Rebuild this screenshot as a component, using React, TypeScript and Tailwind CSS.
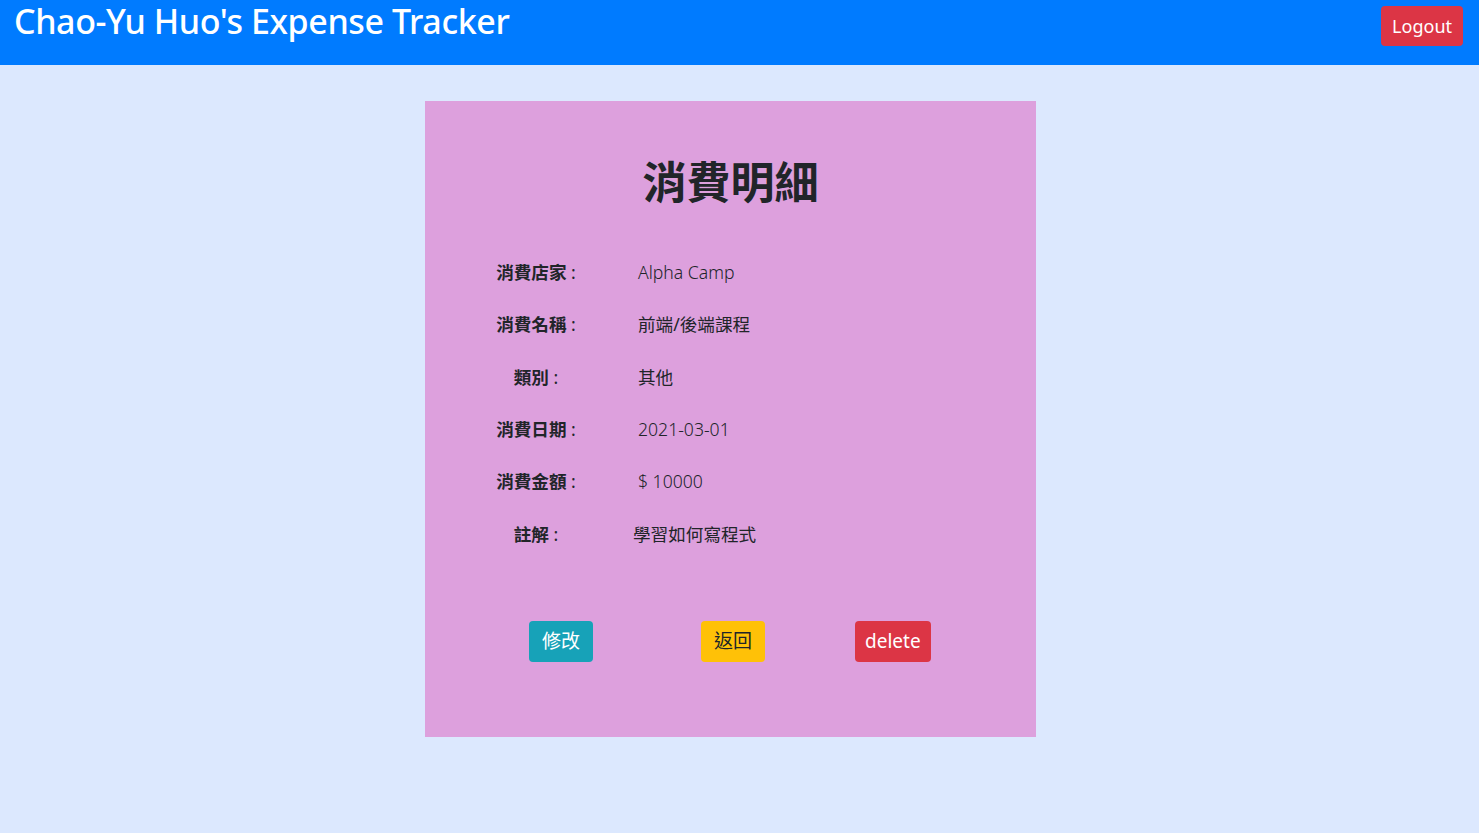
import React from "react";

const font = { fontFamily: '"Noto Sans", "Noto Sans CJK TC", sans-serif' };

const rows: { label: string; value: string; shift?: boolean; cjk?: boolean }[] = [
  { label: "消費店家", value: "Alpha Camp" },
  { label: "消費名稱", value: "前端/後端課程", cjk: true },
  { label: "類別", value: "其他", cjk: true },
  { label: "消費日期", value: "2021-03-01" },
  { label: "消費金額", value: "$ 10000" },
  { label: "註解", value: "學習如何寫程式", shift: true, cjk: true },
];

export default function App() {
  return (
    <div
      className="min-h-[833px] bg-[#dce8fe] text-[#212529] font-['Noto_Sans','Noto_Sans_CJK_TC',sans-serif]"
      style={font}
    >
      <nav className="h-[65px] bg-[#007bff] flex justify-between items-start pl-[14px] pr-[16px]">
        <h1 className="text-white text-[34px] font-medium leading-[1.2] mt-[1px] tracking-[-0.4px]">
          Chao-Yu Huo's Expense Tracker
        </h1>
        <button className="mt-[6px] h-[40px] px-[11px] rounded-[4px] bg-[#dc3545] text-white text-[18px] leading-none">
          Logout
        </button>
      </nav>
      <main className="pt-[36px] flex justify-center pr-[18px]">
        <div className="w-[611px] h-[636px] bg-[#dda0dd] flex flex-col">
          <h2 className="text-center text-[44px] font-bold leading-[1.2] mt-[55px] mb-0">
            消費明細
          </h2>
          <div className="mt-[37px] flex flex-col">
            {rows.map((r) => (
              <div key={r.label} className="flex items-center h-[52.4px] text-[17.6px]">
                <div className="ml-[49px] w-[124px] text-center">
                  <span className="font-bold">{r.label}</span>
                  <span> :</span>
                </div>
                <div
                  className={
                    (r.shift ? "ml-[35px] " : "ml-[40px] ") + (r.cjk ? "font-normal" : "font-light")
                  }
                >
                  {r.value}
                </div>
              </div>
            ))}
          </div>
          <div className="mt-[61px] flex items-center">
            <button className="ml-[104px] h-[41px] px-[13px] rounded-[4px] bg-[#17a2b8] text-white text-[19px] leading-none">
              修改
            </button>
            <button className="ml-[108px] h-[41px] px-[13px] rounded-[4px] bg-[#ffc107] text-[#212529] text-[19px] leading-none">
              返回
            </button>
            <button className="ml-[90px] h-[41px] px-[10px] rounded-[4px] bg-[#dc3545] text-white text-[19px] leading-none">
              delete
            </button>
          </div>
        </div>
      </main>
    </div>
  );
}
